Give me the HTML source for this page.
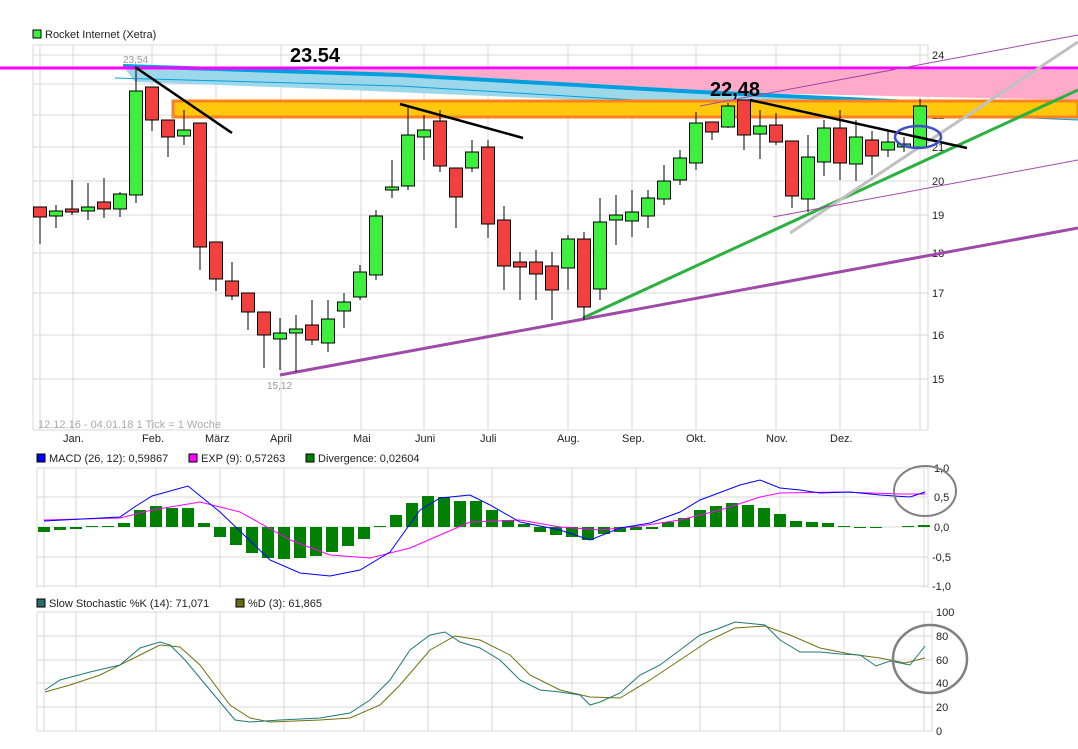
<!DOCTYPE html>
<html><head><meta charset="utf-8"><style>
body{margin:0;background:#fff;width:1078px;height:749px;overflow:hidden}
svg{display:block;font-family:"Liberation Sans",sans-serif}
</style></head><body>
<svg width="1078" height="749" viewBox="0 0 1078 749">
<!-- legend -->
<rect x="33" y="30" width="8" height="8" fill="#3ef03e" stroke="#000" stroke-width="1"/>
<text x="45" y="38" font-size="11" fill="#222">Rocket Internet (Xetra)</text>
<!-- main grid -->
<g stroke="#d8d8d8" stroke-width="1">
<line x1="33" y1="45" x2="33" y2="430"/><line x1="928" y1="45" x2="928" y2="430"/>
<line x1="33" y1="45" x2="928" y2="45"/><line x1="33" y1="430" x2="928" y2="430"/>
<line x1="40" y1="45" x2="40" y2="430"/><line x1="73" y1="45" x2="73" y2="430"/><line x1="152" y1="45" x2="152" y2="430"/><line x1="216" y1="45" x2="216" y2="430"/><line x1="281" y1="45" x2="281" y2="430"/><line x1="361" y1="45" x2="361" y2="430"/><line x1="424" y1="45" x2="424" y2="430"/><line x1="488" y1="45" x2="488" y2="430"/><line x1="568" y1="45" x2="568" y2="430"/><line x1="632" y1="45" x2="632" y2="430"/><line x1="696" y1="45" x2="696" y2="430"/><line x1="776" y1="45" x2="776" y2="430"/><line x1="840" y1="45" x2="840" y2="430"/><line x1="920" y1="45" x2="920" y2="430"/>
<line x1="33" y1="55" x2="928" y2="55"/><line x1="33" y1="84" x2="928" y2="84"/><line x1="33" y1="115" x2="928" y2="115"/><line x1="33" y1="147" x2="928" y2="147"/><line x1="33" y1="181" x2="928" y2="181"/><line x1="33" y1="215" x2="928" y2="215"/><line x1="33" y1="253" x2="928" y2="253"/><line x1="33" y1="293" x2="928" y2="293"/><line x1="33" y1="335" x2="928" y2="335"/><line x1="33" y1="379" x2="928" y2="379"/>
</g>
<g font-size="11" fill="#222">
<text x="932" y="59">24</text><text x="932" y="88">23</text><text x="932" y="119">22</text><text x="932" y="151">21</text><text x="932" y="185">20</text><text x="932" y="219">19</text><text x="932" y="257">18</text><text x="932" y="297">17</text><text x="932" y="339">16</text><text x="932" y="383">15</text>
<text x="63" y="442">Jan.</text><text x="142" y="442">Feb.</text><text x="205" y="442">März</text><text x="270" y="442">April</text><text x="353" y="442">Mai</text><text x="415" y="442">Juni</text><text x="480" y="442">Juli</text><text x="557" y="442">Aug.</text><text x="622" y="442">Sep.</text><text x="686" y="442">Okt.</text><text x="766" y="442">Nov.</text><text x="830" y="442">Dez.</text>
</g>
<text x="38" y="428" font-size="11" fill="#aaa">12.12.16 - 04.01.18   1 Tick = 1 Woche</text>
<!-- bands -->
<polygon points="135,70 1078,70 1078,100 135,80" fill="#ffaac8"/>
<polygon points="123,66 300,72 700,90 1078,108 1078,120 700,105 300,88 135,82" fill="#9dd8ea"/>
<polyline points="123,66 400,75 700,92 1078,110" fill="none" stroke="#00a0e0" stroke-width="4"/>
<polyline points="115,78 400,86 700,104 1078,120" fill="none" stroke="#00a0e0" stroke-width="1"/>
<rect x="173" y="101" width="905" height="16" fill="#ffc80a" stroke="#ff8020" stroke-width="3"/>
<line x1="0" y1="68" x2="1078" y2="68" stroke="#ff00ff" stroke-width="3"/>
<!-- trend lines -->
<line x1="280" y1="375" x2="1078" y2="228" stroke="#a04aa8" stroke-width="3"/>
<line x1="583" y1="318" x2="1078" y2="90" stroke="#2cb040" stroke-width="3"/>
<line x1="790" y1="233" x2="1078" y2="42" stroke="#c0c0c0" stroke-width="3"/>
<line x1="773" y1="217" x2="1078" y2="160" stroke="#a04aa8" stroke-width="1"/>
<line x1="700" y1="106" x2="1078" y2="35" stroke="#a04aa8" stroke-width="1"/>
<!-- candles -->
<g stroke="#000" stroke-width="1">
<line x1="40" y1="207" x2="40" y2="244"/><rect x="33.5" y="207" width="13" height="10" fill="#f04040"/>
<line x1="56" y1="205" x2="56" y2="228"/><rect x="49.5" y="211" width="13" height="5" fill="#3ef03e"/>
<line x1="72" y1="180" x2="72" y2="215"/><rect x="65.5" y="209" width="13" height="3" fill="#f04040"/>
<line x1="88" y1="183" x2="88" y2="220"/><rect x="81.5" y="207" width="13" height="4" fill="#3ef03e"/>
<line x1="104" y1="178" x2="104" y2="218"/><rect x="97.5" y="202" width="13" height="7" fill="#f04040"/>
<line x1="120" y1="192" x2="120" y2="217"/><rect x="113.5" y="194" width="13" height="15" fill="#3ef03e"/>
<line x1="136" y1="67" x2="136" y2="203"/><rect x="129.5" y="91" width="13" height="104" fill="#3ef03e"/>
<line x1="152" y1="87" x2="152" y2="131"/><rect x="145.5" y="87" width="13" height="33" fill="#f04040"/>
<line x1="168" y1="120" x2="168" y2="157"/><rect x="161.5" y="120" width="13" height="17" fill="#f04040"/>
<line x1="184" y1="110" x2="184" y2="145"/><rect x="177.5" y="130" width="13" height="6" fill="#3ef03e"/>
<line x1="200" y1="123" x2="200" y2="270"/><rect x="193.5" y="123" width="13" height="124" fill="#f04040"/>
<line x1="216" y1="242" x2="216" y2="291"/><rect x="209.5" y="242" width="13" height="37" fill="#f04040"/>
<line x1="232" y1="262" x2="232" y2="300"/><rect x="225.5" y="281" width="13" height="15" fill="#f04040"/>
<line x1="248" y1="293" x2="248" y2="330"/><rect x="241.5" y="293" width="13" height="19" fill="#f04040"/>
<line x1="264" y1="312" x2="264" y2="368"/><rect x="257.5" y="312" width="13" height="23" fill="#f04040"/>
<line x1="280" y1="318" x2="280" y2="370"/><rect x="273.5" y="333" width="13" height="6" fill="#3ef03e"/>
<line x1="296" y1="315" x2="296" y2="372"/><rect x="289.5" y="329" width="13" height="4" fill="#3ef03e"/>
<line x1="312" y1="300" x2="312" y2="345"/><rect x="305.5" y="325" width="13" height="15" fill="#f04040"/>
<line x1="328" y1="300" x2="328" y2="352"/><rect x="321.5" y="319" width="13" height="24" fill="#3ef03e"/>
<line x1="344" y1="293" x2="344" y2="328"/><rect x="337.5" y="302" width="13" height="9" fill="#3ef03e"/>
<line x1="360" y1="265" x2="360" y2="300"/><rect x="353.5" y="272" width="13" height="25" fill="#3ef03e"/>
<line x1="376" y1="210" x2="376" y2="280"/><rect x="369.5" y="216" width="13" height="59" fill="#3ef03e"/>
<line x1="392" y1="160" x2="392" y2="198"/><rect x="385.5" y="187" width="13" height="3" fill="#3ef03e"/>
<line x1="408" y1="105" x2="408" y2="190"/><rect x="401.5" y="135" width="13" height="51" fill="#3ef03e"/>
<line x1="424" y1="115" x2="424" y2="160"/><rect x="417.5" y="130" width="13" height="7" fill="#3ef03e"/>
<line x1="440" y1="110" x2="440" y2="172"/><rect x="433.5" y="121" width="13" height="45" fill="#f04040"/>
<line x1="456" y1="168" x2="456" y2="228"/><rect x="449.5" y="168" width="13" height="29" fill="#f04040"/>
<line x1="472" y1="140" x2="472" y2="172"/><rect x="465.5" y="152" width="13" height="16" fill="#3ef03e"/>
<line x1="488" y1="140" x2="488" y2="238"/><rect x="481.5" y="147" width="13" height="77" fill="#f04040"/>
<line x1="504" y1="206" x2="504" y2="290"/><rect x="497.5" y="220" width="13" height="46" fill="#f04040"/>
<line x1="520" y1="252" x2="520" y2="300"/><rect x="513.5" y="262" width="13" height="5" fill="#f04040"/>
<line x1="536" y1="250" x2="536" y2="300"/><rect x="529.5" y="262" width="13" height="12" fill="#f04040"/>
<line x1="552" y1="252" x2="552" y2="320"/><rect x="545.5" y="266" width="13" height="24" fill="#f04040"/>
<line x1="568" y1="235" x2="568" y2="290"/><rect x="561.5" y="239" width="13" height="29" fill="#3ef03e"/>
<line x1="584" y1="232" x2="584" y2="320"/><rect x="577.5" y="239" width="13" height="68" fill="#f04040"/>
<line x1="600" y1="198" x2="600" y2="300"/><rect x="593.5" y="222" width="13" height="67" fill="#3ef03e"/>
<line x1="616" y1="195" x2="616" y2="245"/><rect x="609.5" y="215" width="13" height="5" fill="#3ef03e"/>
<line x1="632" y1="190" x2="632" y2="237"/><rect x="625.5" y="212" width="13" height="9" fill="#3ef03e"/>
<line x1="648" y1="190" x2="648" y2="228"/><rect x="641.5" y="198" width="13" height="18" fill="#3ef03e"/>
<line x1="664" y1="165" x2="664" y2="205"/><rect x="657.5" y="181" width="13" height="18" fill="#3ef03e"/>
<line x1="680" y1="150" x2="680" y2="185"/><rect x="673.5" y="158" width="13" height="22" fill="#3ef03e"/>
<line x1="696" y1="112" x2="696" y2="170"/><rect x="689.5" y="123" width="13" height="40" fill="#3ef03e"/>
<line x1="712" y1="122" x2="712" y2="140"/><rect x="705.5" y="122" width="13" height="10" fill="#f04040"/>
<line x1="728" y1="103" x2="728" y2="128"/><rect x="721.5" y="106" width="13" height="21" fill="#3ef03e"/>
<line x1="744" y1="100" x2="744" y2="150"/><rect x="737.5" y="100" width="13" height="35" fill="#f04040"/>
<line x1="760" y1="110" x2="760" y2="159"/><rect x="753.5" y="126" width="13" height="8" fill="#3ef03e"/>
<line x1="776" y1="113" x2="776" y2="145"/><rect x="769.5" y="125" width="13" height="17" fill="#f04040"/>
<line x1="792" y1="141" x2="792" y2="208"/><rect x="785.5" y="141" width="13" height="55" fill="#f04040"/>
<line x1="808" y1="135" x2="808" y2="212"/><rect x="801.5" y="157" width="13" height="42" fill="#3ef03e"/>
<line x1="824" y1="120" x2="824" y2="176"/><rect x="817.5" y="128" width="13" height="34" fill="#3ef03e"/>
<line x1="840" y1="110" x2="840" y2="180"/><rect x="833.5" y="128" width="13" height="35" fill="#f04040"/>
<line x1="856" y1="120" x2="856" y2="181"/><rect x="849.5" y="137" width="13" height="27" fill="#3ef03e"/>
<line x1="872" y1="131" x2="872" y2="175"/><rect x="865.5" y="140" width="13" height="16" fill="#f04040"/>
<line x1="888" y1="130" x2="888" y2="157"/><rect x="881.5" y="142" width="13" height="8" fill="#3ef03e"/>
<line x1="904" y1="137" x2="904" y2="152"/><rect x="897.5" y="144" width="13" height="3" fill="#3ef03e"/>
<line x1="920" y1="99" x2="920" y2="148"/><rect x="913.5" y="106" width="13" height="41" fill="#3ef03e"/>
</g>
<!-- black trend lines -->
<g stroke="#000" stroke-width="2.5">
<line x1="135" y1="67" x2="232" y2="133"/>
<line x1="400" y1="104" x2="523" y2="138"/>
<line x1="750" y1="100" x2="967" y2="148"/>
</g>
<ellipse cx="918" cy="137" rx="23" ry="11" fill="none" stroke="#4050c8" stroke-width="2.5"/>
<text x="290" y="62" font-size="20" font-weight="bold" fill="#000">23.54</text>
<text x="710" y="96" font-size="20" font-weight="bold" fill="#000">22,48</text>
<text x="123" y="63" font-size="10" fill="#999">23,54</text>
<text x="267" y="389" font-size="10" fill="#999">15,12</text>

<!-- MACD panel -->
<g font-size="11" fill="#222">
<rect x="37" y="454" width="8" height="8" fill="#0000ff" stroke="#000"/><text x="49" y="462">MACD (26, 12): 0,59867</text>
<rect x="189" y="454" width="8" height="8" fill="#ff00ff" stroke="#000"/><text x="201" y="462">EXP (9): 0,57263</text>
<rect x="306" y="454" width="8" height="8" fill="#008000" stroke="#000"/><text x="318" y="462">Divergence: 0,02604</text>
</g>
<g stroke="#d8d8d8" stroke-width="1">
<line x1="37" y1="468" x2="37" y2="588"/><line x1="928" y1="468" x2="928" y2="588"/>
<line x1="37" y1="468" x2="928" y2="468"/><line x1="37" y1="497" x2="928" y2="497"/><line x1="37" y1="527" x2="928" y2="527"/><line x1="37" y1="557" x2="928" y2="557"/><line x1="37" y1="586" x2="928" y2="586"/>
<line x1="44" y1="468" x2="44" y2="588"/><line x1="76" y1="468" x2="76" y2="588"/><line x1="156" y1="468" x2="156" y2="588"/><line x1="220" y1="468" x2="220" y2="588"/><line x1="284" y1="468" x2="284" y2="588"/><line x1="364" y1="468" x2="364" y2="588"/><line x1="428" y1="468" x2="428" y2="588"/><line x1="492" y1="468" x2="492" y2="588"/><line x1="572" y1="468" x2="572" y2="588"/><line x1="636" y1="468" x2="636" y2="588"/><line x1="700" y1="468" x2="700" y2="588"/><line x1="780" y1="468" x2="780" y2="588"/><line x1="844" y1="468" x2="844" y2="588"/><line x1="924" y1="468" x2="924" y2="588"/>
</g>
<g font-size="11" fill="#222"><text x="934" y="472">1,0</text><text x="934" y="501">0,5</text><text x="934" y="531">0,0</text><text x="932" y="561">-0,5</text><text x="932" y="590">-1,0</text></g>
<g fill="#008000">
<rect x="38" y="527" width="12" height="5"/><rect x="54" y="527" width="12" height="3"/><rect x="70" y="527" width="12" height="2"/><rect x="86" y="526" width="12" height="1"/><rect x="102" y="526" width="12" height="1"/><rect x="118" y="523" width="12" height="4"/>
<rect x="134" y="510" width="12" height="17"/><rect x="150" y="506" width="12" height="21"/><rect x="166" y="508" width="12" height="19"/><rect x="182" y="508" width="12" height="19"/><rect x="198" y="523" width="12" height="4"/>
<rect x="214" y="527" width="12" height="10"/><rect x="230" y="527" width="12" height="18"/><rect x="246" y="527" width="12" height="26"/><rect x="262" y="527" width="12" height="31"/><rect x="278" y="527" width="12" height="32"/><rect x="294" y="527" width="12" height="31"/><rect x="310" y="527" width="12" height="29"/><rect x="326" y="527" width="12" height="25"/><rect x="342" y="527" width="12" height="19"/><rect x="358" y="527" width="12" height="12"/>
<rect x="374" y="526" width="12" height="1"/><rect x="390" y="515" width="12" height="12"/><rect x="406" y="503" width="12" height="24"/><rect x="422" y="496" width="12" height="31"/><rect x="438" y="497" width="12" height="30"/><rect x="454" y="501" width="12" height="26"/><rect x="470" y="501" width="12" height="26"/><rect x="486" y="510" width="12" height="17"/><rect x="502" y="520" width="12" height="7"/><rect x="518" y="524" width="12" height="3"/>
<rect x="534" y="527" width="12" height="5"/><rect x="550" y="527" width="12" height="8"/><rect x="566" y="527" width="12" height="10"/><rect x="582" y="527" width="12" height="13"/><rect x="598" y="527" width="12" height="7"/><rect x="614" y="527" width="12" height="5"/><rect x="630" y="527" width="12" height="3"/><rect x="646" y="527" width="12" height="2"/>
<rect x="662" y="522" width="12" height="5"/><rect x="678" y="518" width="12" height="9"/><rect x="694" y="510" width="12" height="17"/><rect x="710" y="506" width="12" height="21"/><rect x="726" y="503" width="12" height="24"/><rect x="742" y="505" width="12" height="22"/><rect x="758" y="508" width="12" height="19"/><rect x="774" y="514" width="12" height="13"/><rect x="790" y="521" width="12" height="6"/><rect x="806" y="522" width="12" height="5"/><rect x="822" y="523" width="12" height="4"/><rect x="838" y="526" width="12" height="1"/><rect x="854" y="527" width="12" height="1"/><rect x="870" y="527" width="12" height="1"/><rect x="902" y="526" width="12" height="1"/><rect x="918" y="525" width="12" height="2"/>
</g>
<polyline fill="none" stroke="#ff00ff" stroke-width="1" points="44,520 120,518 152,510 200,502 240,512 290,540 330,555 370,558 410,548 440,535 470,522 520,520 560,527 600,530 640,526 680,520 720,510 760,497 780,493 840,492 900,494 925,494"/>
<polyline fill="none" stroke="#0000ff" stroke-width="1" points="44,521 120,517 136,506 152,496 188,486 220,512 270,560 300,573 330,576 360,570 390,552 420,510 440,498 470,495 490,505 520,522 560,530 590,540 620,528 650,523 680,512 700,500 740,485 760,480 780,488 800,490 820,493 850,492 880,495 910,497 925,492"/>
<ellipse cx="925" cy="491" rx="31" ry="25" fill="none" stroke="#808080" stroke-width="2"/>

<!-- Stochastic panel -->
<g font-size="11" fill="#222">
<rect x="37" y="599" width="8" height="8" fill="#2a6a6a" stroke="#000"/><text x="49" y="607">Slow Stochastic %K (14): 71,071</text>
<rect x="236" y="599" width="8" height="8" fill="#6a6a10" stroke="#000"/><text x="248" y="607">%D (3): 61,865</text>
</g>
<g stroke="#d8d8d8" stroke-width="1">
<line x1="37" y1="612" x2="37" y2="731"/><line x1="932" y1="612" x2="932" y2="731"/>
<line x1="37" y1="612" x2="932" y2="612"/><line x1="37" y1="636" x2="932" y2="636"/><line x1="37" y1="660" x2="932" y2="660"/><line x1="37" y1="683" x2="932" y2="683"/><line x1="37" y1="707" x2="932" y2="707"/><line x1="37" y1="731" x2="932" y2="731"/>
<line x1="44" y1="612" x2="44" y2="731"/><line x1="76" y1="612" x2="76" y2="731"/><line x1="156" y1="612" x2="156" y2="731"/><line x1="220" y1="612" x2="220" y2="731"/><line x1="284" y1="612" x2="284" y2="731"/><line x1="364" y1="612" x2="364" y2="731"/><line x1="428" y1="612" x2="428" y2="731"/><line x1="492" y1="612" x2="492" y2="731"/><line x1="572" y1="612" x2="572" y2="731"/><line x1="636" y1="612" x2="636" y2="731"/><line x1="700" y1="612" x2="700" y2="731"/><line x1="780" y1="612" x2="780" y2="731"/><line x1="844" y1="612" x2="844" y2="731"/><line x1="924" y1="612" x2="924" y2="731"/>
</g>
<g font-size="11" fill="#222"><text x="936" y="616">100</text><text x="936" y="640">80</text><text x="936" y="664">60</text><text x="936" y="687">40</text><text x="936" y="711">20</text><text x="936" y="735">0</text></g>
<polyline fill="none" stroke="#707010" stroke-width="1" points="45,692 70,685 100,675 130,660 160,645 180,647 200,665 230,705 250,718 270,722 320,720 350,718 380,705 400,685 430,650 455,636 480,640 510,655 530,675 560,690 590,697 620,698 650,680 680,660 710,640 735,628 765,626 790,635 820,648 850,654 880,658 905,663 925,658"/>
<polyline fill="none" stroke="#207878" stroke-width="1" points="45,690 60,680 90,672 120,665 140,648 160,642 170,645 185,660 210,690 235,720 250,722 280,720 320,718 350,713 370,700 390,680 410,650 430,635 445,632 460,642 480,648 500,660 520,680 540,690 560,692 580,695 590,705 600,702 620,693 640,675 660,665 680,650 700,635 720,628 735,622 765,625 780,640 800,652 820,652 840,654 860,655 876,666 890,661 910,665 925,646"/>
<ellipse cx="930" cy="659" rx="37" ry="34" fill="none" stroke="#808080" stroke-width="2.5"/>
</svg>
</body></html>
